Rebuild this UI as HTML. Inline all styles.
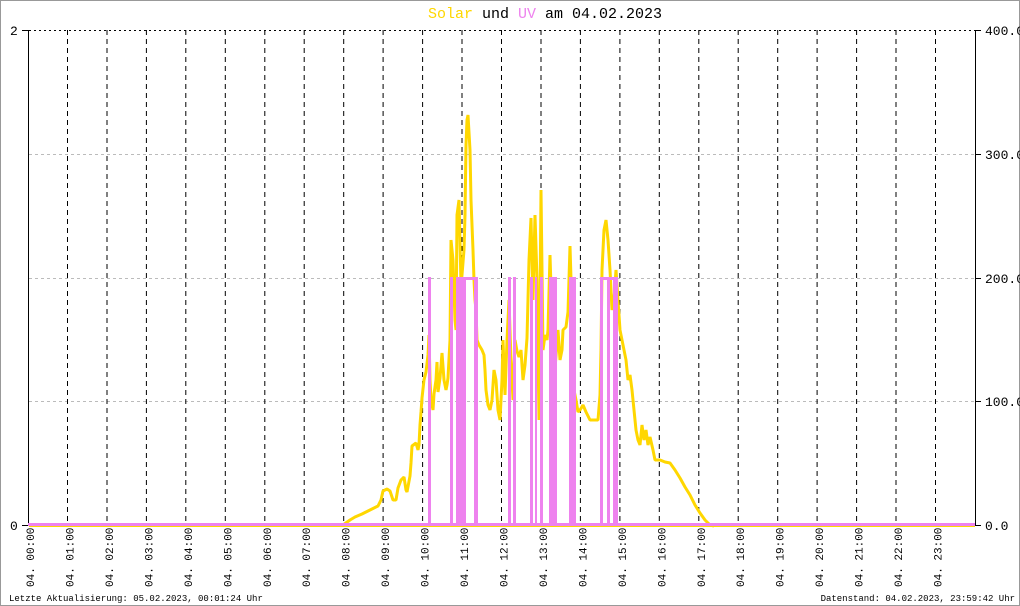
<!DOCTYPE html><html><head><style>body{margin:0;background:#fff}svg{display:block}text{font-family:"Liberation Mono",monospace}</style></head><body>
<svg width="1020" height="606" xmlns="http://www.w3.org/2000/svg">
<rect x="0.5" y="0.5" width="1019" height="605" fill="#fff" stroke="#999"/>
<text x="545" y="18" font-size="15" text-anchor="middle"><tspan fill="#ffd700">Solar</tspan> und <tspan fill="#ee82ee">UV</tspan> am 04.02.2023</text>
<g stroke="#bbb" stroke-dasharray="3,3">
<line x1="29" y1="154.5" x2="975" y2="154.5"/><line x1="29" y1="278.5" x2="975" y2="278.5"/><line x1="29" y1="401.5" x2="975" y2="401.5"/>
</g>
<g stroke="#000" stroke-dasharray="5,4">
<line x1="29" y1="30.5" x2="975" y2="30.5" stroke-dasharray="2,3"/>
<line x1="67.5" y1="30" x2="67.5" y2="525"/><line x1="107" y1="30" x2="107" y2="525"/><line x1="146.4" y1="30" x2="146.4" y2="525"/><line x1="185.8" y1="30" x2="185.8" y2="525"/><line x1="225.3" y1="30" x2="225.3" y2="525"/><line x1="264.8" y1="30" x2="264.8" y2="525"/><line x1="304.2" y1="30" x2="304.2" y2="525"/><line x1="343.7" y1="30" x2="343.7" y2="525"/><line x1="383.1" y1="30" x2="383.1" y2="525"/><line x1="422.6" y1="30" x2="422.6" y2="525"/><line x1="462" y1="30" x2="462" y2="525"/><line x1="501.5" y1="30" x2="501.5" y2="525"/><line x1="541" y1="30" x2="541" y2="525"/><line x1="580.4" y1="30" x2="580.4" y2="525"/><line x1="619.9" y1="30" x2="619.9" y2="525"/><line x1="659.3" y1="30" x2="659.3" y2="525"/><line x1="698.8" y1="30" x2="698.8" y2="525"/><line x1="738.2" y1="30" x2="738.2" y2="525"/><line x1="777.7" y1="30" x2="777.7" y2="525"/><line x1="817.1" y1="30" x2="817.1" y2="525"/><line x1="856.6" y1="30" x2="856.6" y2="525"/><line x1="896" y1="30" x2="896" y2="525"/><line x1="935.5" y1="30" x2="935.5" y2="525"/>
</g>
<g stroke="#000"><line x1="28.5" y1="30" x2="28.5" y2="526"/><line x1="975.5" y1="30" x2="975.5" y2="526"/>
<line x1="22" y1="30.5" x2="29" y2="30.5"/><line x1="22" y1="525.5" x2="29" y2="525.5"/>
<line x1="975" y1="30.5" x2="981" y2="30.5"/><line x1="975" y1="154.5" x2="981" y2="154.5"/><line x1="975" y1="278.5" x2="981" y2="278.5"/><line x1="975" y1="401.5" x2="981" y2="401.5"/><line x1="975" y1="525.5" x2="981" y2="525.5"/></g>
<g font-size="13"><text x="10" y="35">2</text><text x="10" y="530">0</text>
<text x="985" y="35">400.0</text><text x="985" y="159">300.0</text><text x="985" y="283">200.0</text><text x="985" y="406">100.0</text><text x="985" y="530">0.0</text></g>
<line x1="29" y1="526" x2="975" y2="526" stroke="#ffd700" stroke-width="2"/>
<polyline fill="none" stroke="#ffd700" stroke-width="3" stroke-linejoin="bevel" points="343,525 350,520 355,517 362,514 370,510 378,506 381,500 383,491 387,489 390,491 393,500 396,500 398,488 401,480 404,477 406,490 407,492 410,476 411,463 412,446 416,443 418,450 419,445 420,425 421,412 422,398 424,380 426,372 428,355 429,335 430,380 431,400 433,410 434,394 436,380 437,362 438,392 440,378 442,353 444,380 446,390 447,385 448,378 450,340 451,240 453,260 455,320 456,330 457,215 459,200 461,285 462,275 464,250 465,215 466,145 467,120 468,115 470,150 471,200 473,250 474,280 475,300 476,310 477,340 479,345 482,350 484,355 485,370 486,390 488,405 490,410 492,400 494,370 496,380 498,410 500,420 502,380 503,340 505,395 507,340 509,300 511,360 513,400 515,340 517,351 519,357 521,350 523,380 525,365 527,338 529,260 531,218 533,300 535,215 537,280 539,420 541,190 543,350 545,335 547,340 548,330 550,255 552,320 554,380 556,356 558,330 560,360 562,350 563,330 566,327 568,312 570,246 572,312 573,330 574,390 576,400 578,412 580,410 583,405 586,412 590,420 595,420 598,420 600,395 601,350 602,270 604,230 606,220 608,240 610,270 612,310 614,300 616,270 618,300 620,330 622,340 624,350 626,360 628,380 630,375 632,390 634,410 636,430 638,440 640,445 642,425 644,440 646,430 648,445 650,437 653,450 655,460 660,460 665,462 670,463 675,470 680,478 685,487 690,495 695,505 700,513 705,520 710,525 714,526"/>
<g fill="#ee82ee">
<rect x="28" y="523" width="947" height="3"/>
<rect x="428" y="277" width="3" height="248"/><rect x="450" y="277" width="3" height="248"/><rect x="456" y="277" width="10" height="248"/><rect x="456" y="277" width="22" height="3"/><rect x="474" y="277" width="4" height="248"/>
<rect x="508" y="277" width="3" height="248"/><rect x="513" y="277" width="3" height="248"/><rect x="530" y="277" width="3" height="248"/><rect x="535" y="277" width="2" height="248"/><rect x="540" y="277" width="3" height="248"/><rect x="549" y="277" width="8" height="248"/><rect x="569" y="277" width="7" height="248"/><rect x="600" y="277" width="3" height="248"/><rect x="600" y="277" width="18" height="3"/><rect x="607" y="277" width="3" height="248"/><rect x="613" y="277" width="5" height="248"/>
</g>
<g font-size="11">
<text transform="translate(34,587) rotate(-90)">04. 00:00</text><text transform="translate(73.5,587) rotate(-90)">04. 01:00</text><text transform="translate(113,587) rotate(-90)">04. 02:00</text><text transform="translate(152.4,587) rotate(-90)">04. 03:00</text><text transform="translate(191.8,587) rotate(-90)">04. 04:00</text><text transform="translate(231.3,587) rotate(-90)">04. 05:00</text><text transform="translate(270.8,587) rotate(-90)">04. 06:00</text><text transform="translate(310.2,587) rotate(-90)">04. 07:00</text><text transform="translate(349.7,587) rotate(-90)">04. 08:00</text><text transform="translate(389.1,587) rotate(-90)">04. 09:00</text><text transform="translate(428.6,587) rotate(-90)">04. 10:00</text><text transform="translate(468,587) rotate(-90)">04. 11:00</text><text transform="translate(507.5,587) rotate(-90)">04. 12:00</text><text transform="translate(547,587) rotate(-90)">04. 13:00</text><text transform="translate(586.4,587) rotate(-90)">04. 14:00</text><text transform="translate(625.9,587) rotate(-90)">04. 15:00</text><text transform="translate(665.3,587) rotate(-90)">04. 16:00</text><text transform="translate(704.8,587) rotate(-90)">04. 17:00</text><text transform="translate(744.2,587) rotate(-90)">04. 18:00</text><text transform="translate(783.7,587) rotate(-90)">04. 19:00</text><text transform="translate(823.1,587) rotate(-90)">04. 20:00</text><text transform="translate(862.6,587) rotate(-90)">04. 21:00</text><text transform="translate(902,587) rotate(-90)">04. 22:00</text><text transform="translate(941.5,587) rotate(-90)">04. 23:00</text>
</g>
<g font-size="9"><text x="9" y="601">Letzte Aktualisierung: 05.02.2023, 00:01:24 Uhr</text><text x="1015" y="601" text-anchor="end">Datenstand: 04.02.2023, 23:59:42 Uhr</text></g>
</svg></body></html>
